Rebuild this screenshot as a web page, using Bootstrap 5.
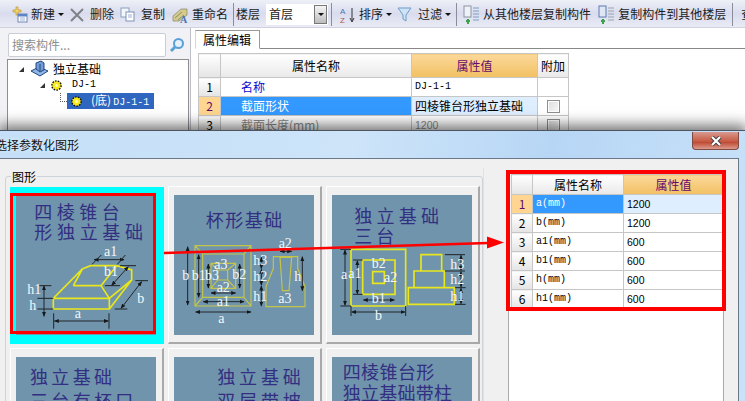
<!DOCTYPE html>
<html lang="zh">
<head>
<meta charset="utf-8">
<title>选择参数化图形</title>
<link href="https://cdn.jsdelivr.net/npm/bootstrap@5.3.0/dist/css/bootstrap.min.css" rel="stylesheet">
<style>
html,body{width:745px;height:401px;overflow:hidden;margin:0;background:#f1f1f5;color:#000;font:12px/1.2 "Noto Sans CJK SC","Liberation Sans",sans-serif}
.mono{font-family:"Liberation Mono","Noto Sans CJK SC",monospace;font-size:10px}
.shell{width:745px;height:401px}
.tbar{height:28px;padding:2px 0 0 6px;background:linear-gradient(#eef0f7 0,#d9dcee 50%,#e9ebf4 100%);border-bottom:1px solid #d0d2e2;white-space:nowrap;font-size:12px;color:#1b1b1b}
.tbar>*{flex:none}
.tb-i{margin-left:2px}
.tb-first{margin-left:5px}
.tb-lbl{margin-left:3px}
.tb-gap{margin-left:6px}
.tb-gap-s{margin-left:5px}
.tb-gap-xs{margin-left:4px}
.tb-gap-wide{margin-left:7px}
.tb-caret{width:0;height:0;border:3px solid transparent;border-top:3px solid #111;border-bottom:0;margin-left:3px}
.tb-sep{width:1px;height:23px;background:#8a8d99;margin:0 4px 0 5px;flex:none}
.tb-sep-first{margin-right:2px}
.tb-sep-mid{margin-left:3px}
.tb-sep-last{margin-left:6px;margin-right:8px}
.floorsel{width:62px;height:21px;background:#fff;margin-left:6px;padding-left:3px;position:relative;font-size:12px}
.floorbtn{width:13px;height:19px;background:linear-gradient(#f5f5f5,#bdbdbd);border:1px solid #777;margin-left:auto;margin-right:1px}
.leftp{width:190px;flex:none;padding:5px 1px 0 7px;background:#f2f2f6}
.searchbox{width:158px;height:24px;margin-left:1px;background:#fff;border:1px solid #c9cdd6;border-radius:2px;color:#8d8d8d;padding:2px 3px;font-size:12px;line-height:18px}
.treebox{height:80px;margin-top:2px;border:1px solid #8e8e8e;border-bottom:0;background:#fff;padding-top:1px}
.trow{height:16px;align-items:center;white-space:nowrap}
.t0{padding-left:11px}
.t1{padding-left:32px}
.t2{padding-left:51px;height:16px}
.tdots{width:7px;height:9px;margin-top:-8px;border-left:1px dotted #555;border-bottom:1px dotted #555;flex:none;margin-left:1px}
.tsel{background:#2e66c0;color:#fff;height:16px;width:87px;padding-left:4px;align-items:center;gap:9px}
.tsel .mono{margin-left:2px}
.tarrow{width:0;height:0;border-left:5px solid transparent;border-bottom:5px solid #333;margin-right:3px}
.tname{margin-left:3px}
.dj{margin-left:10px}
.rightp{flex:1;background:#fff;padding-left:4px;border-left:1px solid #bfbfc8}
.tabstrip{height:21px;margin-top:0;padding-top:2px;border-bottom:1px solid #888;align-items:flex-end}
.tabone{height:19px;padding:0 8px 0 7px;margin-bottom:-1px;background:#fff;border:1px solid #999;border-bottom:1px solid #fff;border-left-color:#d6d6d6;line-height:17px}
.pg{table-layout:fixed;border-collapse:collapse;--bs-table-bg:#fff;--bs-table-border-color:#c6c6c6;--bs-table-color:#000;font-size:12px}
.pg.table>:not(caption)>*>*{padding:0 3px;border-width:1px;line-height:16px;vertical-align:middle;white-space:nowrap;overflow:hidden}
.pg-bg{width:370px;margin:4px 0 0 3px}
.c-num{width:22px}.c-name{width:191px}.c-val{width:126px}.c-extra{width:31px}
.pg-bg thead tr{height:24px}.pg-bg tbody tr{height:19px}
.pg.table .hgray{--bs-table-bg:#f4f4f4;background-image:linear-gradient(#fff,#e9e9e9);text-align:center}
.pg.table .hgold{background-image:linear-gradient(#fbd89a,#f2c063);color:#650a6c;text-align:center;--bs-table-bg:transparent;--bs-table-color:#650a6c;--bs-table-color-state:#650a6c;--bs-table-color-type:#650a6c}
.pg.table .hnum{background-image:linear-gradient(#fff,#e4e4e4);text-align:center}
.pg.table .hnow{--bs-table-bg:#ffd591;color:#650a6c;--bs-table-color:#650a6c;--bs-table-color-state:#650a6c;--bs-table-color-type:#650a6c;text-align:center}
.pg.table .csel{--bs-table-bg:#3399ff;color:#fff;--bs-table-color:#fff;--bs-table-color-state:#fff;--bs-table-color-type:#fff}
.pg.table .cval{--bs-table-bg:#deeeff}
.pg.table .clink{color:#0a0ad2;--bs-table-color:#0a0ad2;--bs-table-color-state:#0a0ad2;--bs-table-color-type:#0a0ad2;padding-left:20px}
.pg.table .cname{padding-left:20px}
.pg.table .cgrey{color:#8a8a8a;--bs-table-color:#8a8a8a;--bs-table-color-state:#8a8a8a;--bs-table-color-type:#8a8a8a}
.fakecheck{display:block;width:13px;height:13px;margin:0 auto;border:1px solid #8f8f8f;background:linear-gradient(135deg,#dcdcdc,#fafafa);box-shadow:inset 0 0 0 1px #fff}
.dlg{position:absolute;left:0;right:0;top:130px;bottom:0;padding:1px 6px 0 0;border-top:1px solid #4f5560;background:linear-gradient(100deg,#c4dff7 0,#cde4f9 45%,#b7d6f5 70%,#c9e2f9 100%);box-shadow:0 -3px 13px 2px rgba(0,0,0,.55)}
.dlg-title{height:26px;padding:1px 0 0 0;margin-left:-5px;font-size:12px;line-height:24px;color:#111;text-shadow:0 0 4px #e9f4ff}
.dlg-close{width:47px;height:18px;margin-left:auto;margin-top:-1px;margin-right:0;border:1px solid #7c4c45;border-top:0;border-radius:0 0 4px 4px;background:linear-gradient(#d99a8f,#c75a43 55%,#be4a33 60%,#dc9a8c);color:#fff}
.dlg-body{height:260px;background:#f0f0f0;border-top:1px solid #6a7889;border-right:1px solid #6a7889;padding:9px 0 0 0}
.gal-col{width:484px;flex:none;position:relative;padding:17px 0 0 0;border-right:1px solid #e2e2e2}
.gal-title{position:absolute;left:11px;top:0;background:#f0f0f0;padding:0 1px;z-index:1;line-height:17px}
.gal-frame{position:absolute;left:5px;right:0;top:8px;height:300px;border:1px solid #ccd3db;border-radius:3px}
.gal-grid{position:relative;display:grid;grid-template-columns:repeat(3,154px);grid-auto-rows:158px;gap:4px;padding-left:10px;margin-top:1px}
.gtile{position:relative;background:#f0f0f0;border:1px solid #fff;border-right:2px solid #a9a9a9;border-bottom:2px solid #a9a9a9;padding:8px 0 0 5px}
.gtile.on{background:#00ffff;border:0;padding:8px 0 0 6px;margin-top:1px}
.gtile svg{display:block;width:140px;height:140px;background:#7094ab}
.t-cap{fill:#322f82;font-family:"Noto Sans CJK SC",sans-serif;font-size:54px}
.t-let{fill:#f4f8fb;font-family:"Liberation Serif",serif;font-size:42px}
.yl{fill:none;stroke:#e8e61c;stroke-width:5}
.yl2{fill:none;stroke:#c3c54a;stroke-width:3.5}
.dm{fill:none;stroke:#202428;stroke-width:3}
.param-col{margin-left:24px;width:216px;flex:none;background:#fff;border:1px solid #ababab;border-bottom:0;margin-top:2px;height:300px;padding:3px 0 0 2px}
.pg-dlg{width:212px;margin:0}
.d-num{width:21px}.d-name{width:91px}.d-val{width:100px}
.pg-dlg thead tr{height:20px}.pg-dlg tbody tr{height:19px}
.sans11{font-family:"Liberation Sans",sans-serif;font-size:10.5px}
.anno{position:absolute;left:0;top:0;width:745px;height:401px;pointer-events:none}
</style>
</head>
<body>
<div class="shell position-relative overflow-hidden">
  <!-- main window -->
  <div class="tbar d-flex align-items-center">
    <svg class="tb-first" width="17" height="17" viewBox="0 0 17 17"><path d="M2 4h3V1h2v3h3v2H7v3H5V6H2z" fill="#f3d36a" stroke="#c09a30" stroke-width=".7"/><rect x="7" y="8" width="9" height="8" fill="#fff" stroke="#6c87b5"/><rect x="7" y="8" width="9" height="2.5" fill="#5d83c8"/><path d="M9 12h5M9 14h5" stroke="#9db1d2"/></svg>
    <span class="tb-lbl">新建</span><span class="tb-caret"></span>
    <svg class="tb-gap" width="14" height="14" viewBox="0 0 14 14"><path d="M1 1l12 12M13 1L1 13" stroke="#7f8287" stroke-width="2"/></svg>
    <span class="tb-gap">删除</span>
    <svg class="tb-gap" width="15" height="15" viewBox="0 0 15 15"><rect x="1" y="1" width="8" height="9" fill="#f4f6fb" stroke="#8aa0bf"/><rect x="6" y="5" width="8" height="9" fill="#fff" stroke="#7d93b5"/><path d="M8 8h4M8 10h4" stroke="#9db1d2"/></svg>
    <span class="tb-gap">复制</span>
    <svg class="tb-gap" width="18" height="18" viewBox="0 0 18 18"><path d="M2 10L10 3h6v6l-8 6H2z" fill="#d6c98c" stroke="#8f8f72" stroke-width=".8"/><path d="M4 12l7-6M7 14l6-5" stroke="#7a9a6a"/><text x="9" y="17" font-family="Liberation Serif" font-size="10" font-weight="bold" fill="#4f71b3">A</text></svg>
    <span class="tb-lbl">重命名</span>
    <span class="tb-sep tb-sep-first"></span>
    <span>楼层</span>
    <div class="floorsel d-flex align-items-center">首层
      <span class="floorbtn d-flex align-items-center justify-content-center"><span class="tb-caret m-0"></span></span>
    </div>
    <span class="tb-sep tb-sep-mid"></span>
    <svg class="tb-gap-xs" width="16" height="18" viewBox="0 0 16 18"><text x="0" y="8" font-family="Liberation Sans" font-size="8" fill="#4f71b3">A</text><text x="0" y="17" font-family="Liberation Sans" font-size="8" fill="#b0594f">Z</text><path d="M12 2v13M10 12l2 4 2-4" stroke="#333" fill="none"/></svg>
    <span class="tb-lbl">排序</span><span class="tb-caret"></span>
    <svg class="tb-gap-s" width="15" height="15" viewBox="0 0 15 15"><path d="M1 1h13L9 8v6L6 12V8z" fill="#cfe3f7" stroke="#6d9bc8"/></svg>
    <span class="tb-gap">过滤</span><span class="tb-caret"></span>
    <span class="tb-sep"></span>
    <svg class="tb-i" width="17" height="20" viewBox="0 0 17 20"><rect x="1" y="1" width="7" height="11" fill="#eef1f6" stroke="#8b94a3"/><path d="M10 3h6M10 6h6M10 9h6M10 12h6M10 15h6" stroke="#7f9ec4"/><path d="M3 16h4M5 14v5" stroke="#3da14a" stroke-width="2"/></svg>
    <span class="tb-lbl">从其他楼层复制构件</span>
    <svg class="tb-gap-wide" width="17" height="20" viewBox="0 0 17 20"><rect x="1" y="1" width="7" height="11" fill="#dfe7f5" stroke="#5f7bb0"/><path d="M10 3h6M10 6h6M10 9h6M10 12h6M10 15h6" stroke="#9aa4b0"/><path d="M3 16h4M5 14v5" stroke="#3da14a" stroke-width="2"/></svg>
    <span class="tb-lbl">复制构件到其他楼层</span>
    <span class="tb-sep tb-sep-last"></span>
    <span>查</span>
  </div>
  <div class="d-flex">
    <div class="leftp">
      <div class="d-flex align-items-center">
        <div class="searchbox">搜索构件...</div>
        <svg class="ms-1" width="16" height="16" viewBox="0 0 16 16"><circle cx="9.5" cy="6.5" r="4.5" fill="#e4f1fb" stroke="#5aa0d8" stroke-width="2"/><path d="M6 10l-4 4" stroke="#5aa0d8" stroke-width="3"/></svg>
      </div>
      <div class="treebox">
        <div class="trow t0 d-flex">
          <span class="tarrow"></span>
          <svg class="ms-1" width="20" height="18" viewBox="0 0 20 18"><path d="M1 11l8-4 9 4-8 5z" fill="#8fb6e4" stroke="#24467f"/><path d="M6 3l5-2 3 2v7l-4 2-4-3z" fill="#6f9cd8" stroke="#24467f"/><path d="M10 4v7" stroke="#24467f"/></svg>
          <span class="tname">独立基础</span>
        </div>
        <div class="trow t1 d-flex">
          <span class="tarrow"></span>
          <svg class="ms-1" width="11" height="11" viewBox="0 0 11 11"><circle cx="5.5" cy="5.5" r="4.6" fill="#f6e91c" stroke="#111" stroke-dasharray="1.6 1.2" stroke-width="1.4"/><circle cx="5.5" cy="5.5" r="1.4" fill="#fffbc0"/></svg>
          <span class="mono dj">DJ-1</span>
        </div>
        <div class="trow t2 d-flex">
          <span class="tdots"></span>
          <span class="tsel d-flex"><svg width="11" height="11" viewBox="0 0 11 11"><circle cx="5.5" cy="5.5" r="4.6" fill="#f6e91c" stroke="#111" stroke-dasharray="1.6 1.2" stroke-width="1.4"/><circle cx="5.5" cy="5.5" r="1.4" fill="#fffbc0"/></svg><span>(底)<span class="mono">DJ-1-1</span></span></span>
        </div>
      </div>
    </div>
    <div class="rightp">
      <div class="tabstrip d-flex"><div class="tabone">属性编辑</div></div>
      <table class="table table-bordered pg pg-bg">
        <thead><tr><th class="c-num hnum"></th><th class="c-name hgray fw-normal">属性名称</th><th class="c-val hgold fw-normal">属性值</th><th class="c-extra hgray fw-normal">附加</th></tr></thead>
        <tbody>
          <tr><td class="hnum">1</td><td class="clink">名称</td><td class="mono">DJ-1-1</td><td></td></tr>
          <tr><td class="hnow">2</td><td class="csel cname">截面形状</td><td class="cval">四棱锥台形独立基础</td><td><span class="fakecheck"></span></td></tr>
          <tr><td class="hnum">3</td><td class="cgrey cname">截面长度(mm)</td><td class="cgrey sans11">1200</td><td><span class="fakecheck"></span></td></tr>
        </tbody>
      </table>
    </div>
  </div>

  <!-- dialog window -->
  <div class="dlg">
    <div class="d-flex dlg-title">
      <span>选择参数化图形</span>
      <span class="dlg-close d-flex align-items-center justify-content-center"><svg width="12" height="10" viewBox="0 0 12 10"><path d="M2 1l8 8M10 1L2 9" stroke="#3f3f3f" stroke-width="4"/><path d="M2 1l8 8M10 1L2 9" stroke="#fff" stroke-width="2.2"/></svg></span>
    </div>
    <div class="dlg-body d-flex">
      <div class="gal-col">
        <div class="gal-frame"></div>
        <div class="gal-title">图形</div>
        <div class="gal-grid">
          <div class="gtile on">
            <svg viewBox="48 210 420 420">
              <defs>
                <marker id="ah" viewBox="0 0 10 10" refX="9" refY="5" markerWidth="5" markerHeight="5" orient="auto-start-reverse"><path d="M0 1l10 4-10 4z" fill="#15181b"/></marker>
              </defs>
              <text class="t-cap" x="103" y="283" textLength="256">四棱锥台</text>
              <text class="t-cap" x="103" y="343" textLength="326">形独立基础</text>
              <path class="yl" d="M160 520h168v32H160zM160 520l87-88 25-10h78l45 13v30l-67 87M328 520l67-55M220 482h83l25 38M303 482l47-60M220 482l27-50"/>
              <path class="dm" marker-start="url(#ah)" marker-end="url(#ah)" d="M282 404h90"/>
              <path class="dm" d="M276 418l28-28M352 418l24-28"/>
              <path class="dm" marker-start="url(#ah)" marker-end="url(#ah)" d="M385 425l-50 56"/>
              <path class="dm" d="M360 422h48M315 482h45"/>
              <path class="dm" marker-start="url(#ah)" marker-end="url(#ah)" d="M425 470l-62 80"/>
              <path class="dm" d="M406 467h38M344 552h38"/>
              <path class="dm" marker-start="url(#ah)" d="M132 482v38"/>
              <path class="dm" marker-end="url(#ah)" d="M132 520v54"/>
              <path class="dm" d="M118 482h36M112 520h48M112 552h48"/>
              <path class="dm" marker-start="url(#ah)" marker-end="url(#ah)" d="M163 588h162"/>
              <path class="dm" d="M161 565v46M327 565v46"/>
              <text class="t-let" x="312" y="393">a1</text><text class="t-let" x="312" y="453">b1</text>
              <text class="t-let" x="82" y="508">h1</text><text class="t-let" x="88" y="555">h</text>
              <text class="t-let" x="224" y="580">a</text><text class="t-let" x="412" y="535">b</text>
            </svg>
          </div>
          <div class="gtile">
            <svg viewBox="27 45 420 420">
              <text class="t-cap" x="122" y="140" textLength="230">杯形基础</text>
              <path class="yl2" d="M90 197h168v181H90zM113 222h124v130H113zM138 250h74v75h-74zM158 270h30v30h-30zM90 197l23 25M258 197l-21 25M90 378l23-26M258 378l-21-26M138 325l20-25M212 325l-24-25M138 250l20 20M212 250l-24 20M303 320l22-55v-35h73v35l22 55v60H303z"/>
              <path class="yl2" stroke-width="2" d="M345 232h35l-8 100h-20z"/>
              <path class="dm" marker-start="url(#ah)" marker-end="url(#ah)" d="M68 200v175"/>
              <path class="dm" marker-start="url(#ah)" marker-end="url(#ah)" d="M101 224v128"/>
              <path class="dm" marker-start="url(#ah)" marker-end="url(#ah)" d="M92 396h166"/>
              <path class="dm" marker-start="url(#ah)" marker-end="url(#ah)" d="M115 365h122"/>
              <path class="dm" marker-start="url(#ah)" marker-end="url(#ah)" d="M138 339h74"/>
              <path class="dm" marker-start="url(#ah)" marker-end="url(#ah)" d="M224 252v72"/>
              <path class="dm" marker-start="url(#ah)" marker-end="url(#ah)" d="M130 252v72"/>
              <path class="dm" marker-start="url(#ah)" marker-end="url(#ah)" d="M289 232v34"/>
              <path class="dm" marker-start="url(#ah)" marker-end="url(#ah)" d="M289 268v48"/>
              <path class="dm" marker-start="url(#ah)" marker-end="url(#ah)" d="M289 318v60"/>
              <path class="dm" marker-start="url(#ah)" marker-end="url(#ah)" d="M412 230v102"/>
              <path class="dm" marker-start="url(#ah)" marker-end="url(#ah)" d="M345 214h35"/>
              <text class="t-let" x="52" y="300">b</text><text class="t-let" x="80" y="300">b1</text><text class="t-let" x="120" y="300">b3</text>
              <text class="t-let" x="148" y="268">a3</text><text class="t-let" x="202" y="298">b2</text><text class="t-let" x="155" y="336">a2</text>
              <text class="t-let" x="155" y="378">a1</text><text class="t-let" x="160" y="430">a</text>
              <text class="t-let" x="265" y="256">h3</text><text class="t-let" x="265" y="304">h2</text><text class="t-let" x="265" y="364">h1</text>
              <text class="t-let" x="341" y="204">a2</text><text class="t-let" x="340" y="368">a3</text><text class="t-let" x="388" y="302">h</text>
            </svg>
          </div>
          <div class="gtile">
            <svg viewBox="21 45 420 420">
              <text class="t-cap" x="88" y="130" textLength="254">独立基础</text>
              <text class="t-cap" x="88" y="190" textLength="120">三台</text>
              <path class="yl" d="M78 208h164v170H78zM113 240h97v103h-97zM143 275h35v35h-35zM250 323h138v50H250zM267 273h91v50h-91zM288 224h62v49h-62z"/>
              <path class="dm" marker-start="url(#ah)" marker-end="url(#ah)" d="M60 210v166"/>
              <path class="dm" marker-start="url(#ah)" marker-end="url(#ah)" d="M97 242v100"/>
              <path class="dm" marker-start="url(#ah)" marker-end="url(#ah)" d="M80 396h160"/>
              <path class="dm" marker-start="url(#ah)" marker-end="url(#ah)" d="M115 360h93"/>
              <path class="dm" d="M46 208h32M46 378h32M84 240h29M84 343h29M78 378v30M242 378v30M360 224h60M360 273h60M390 323h32M390 373h32"/>
              <path class="dm" marker-start="url(#ah)" marker-end="url(#ah)" d="M408 226v45"/>
              <path class="dm" marker-start="url(#ah)" marker-end="url(#ah)" d="M408 275v46"/>
              <path class="dm" marker-start="url(#ah)" marker-end="url(#ah)" d="M408 325v46"/>
              <text class="t-let" x="48" y="298">a</text><text class="t-let" x="70" y="295">a1</text><text class="t-let" x="140" y="263">b2</text>
              <text class="t-let" x="177" y="306">a2</text><text class="t-let" x="140" y="368">b1</text><text class="t-let" x="150" y="420">b</text>
              <text class="t-let" x="376" y="266">h3</text><text class="t-let" x="376" y="312">h2</text><text class="t-let" x="376" y="362">h1</text>
            </svg>
          </div>
          <div class="gtile">
            <svg viewBox="48 51 420 420">
              <text class="t-cap" x="90" y="133" textLength="246">独立基础</text>
              <text class="t-cap" x="90" y="205" textLength="310">三台有杯口</text>
            </svg>
          </div>
          <div class="gtile">
            <svg viewBox="48 51 420 420">
              <text class="t-cap" x="178" y="133" textLength="250">独立基础</text>
              <text class="t-cap" x="178" y="205" textLength="250">双层带坡</text>
            </svg>
          </div>
          <div class="gtile">
            <svg viewBox="48 51 420 420">
              <text class="t-cap" x="80" y="117" textLength="275">四棱锥台形</text>
              <text class="t-cap" x="80" y="180" textLength="328">独立基础带柱</text>
            </svg>
          </div>
        </div>
      </div>
      <div class="param-col">
        <table class="table table-bordered pg pg-dlg">
          <thead><tr><th class="d-num hnum"></th><th class="d-name hgray fw-normal">属性名称</th><th class="d-val hgold fw-normal">属性值</th></tr></thead>
          <tbody>
            <tr><td class="hnow">1</td><td class="csel mono">a(mm)</td><td class="cval sans11">1200</td></tr>
            <tr><td class="hnum">2</td><td class="mono">b(mm)</td><td class="sans11">1200</td></tr>
            <tr><td class="hnum">3</td><td class="mono">a1(mm)</td><td class="sans11">600</td></tr>
            <tr><td class="hnum">4</td><td class="mono">b1(mm)</td><td class="sans11">600</td></tr>
            <tr><td class="hnum">5</td><td class="mono">h(mm)</td><td class="sans11">600</td></tr>
            <tr><td class="hnum">6</td><td class="mono">h1(mm)</td><td class="sans11">600</td></tr>
          </tbody>
        </table>
      </div>
    </div>
  </div>

  <!-- red annotations drawn over the screenshot -->
  <svg class="anno" viewBox="0 0 745 401">
    <rect x="11.5" y="194.5" width="143" height="138" fill="none" stroke="#ff0000" stroke-width="3"/>
    <rect x="508" y="172" width="216" height="137" fill="none" stroke="#ff0000" stroke-width="4"/>
    <path d="M164 253L488 243" stroke="#ff0000" stroke-width="2.5"/>
    <path d="M487 236.5L504 242.5L487 248.5z" fill="#ff0000"/>
  </svg>
</div>
</body>
</html>
